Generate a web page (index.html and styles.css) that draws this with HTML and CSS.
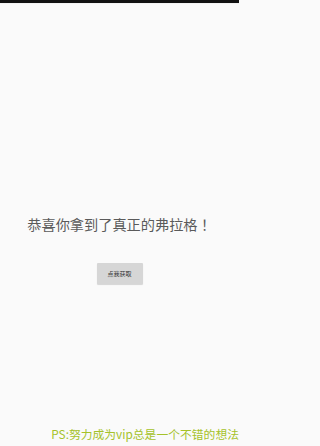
FILE: index.html
```html
<!DOCTYPE html>
<html>
<head>
<meta charset="utf-8">
<link rel="stylesheet" href="styles.css">
</head>
<body>
<div class="page">
  <div class="statusbar"></div>
  <main class="screen">
    <div class="center">
      <h1 class="title">恭喜你拿到了真正的弗拉格！</h1>
      <button class="btn">点我获取</button>
    </div>
    <p class="hint">PS:努力成为vip总是一个不错的想法</p>
  </main>
</div>
</body>
</html>
```
FILE: styles.css
```css
html, body {
  margin: 0;
  padding: 0;
  background: #fafafa;
  font-family: "Noto Sans CJK TC", "Noto Sans", sans-serif;
}
.page {
  width: 239px;
  height: 446px;
  overflow: hidden;
}
.statusbar {
  height: 3px;
  background: #111;
}
.screen {
  height: 443px;
  display: flex;
  flex-direction: column;
  border-top: 1px solid #f2f2f2;
  box-sizing: border-box;
}
.center {
  flex: 1;
  display: flex;
  flex-direction: column;
  align-items: center;
  padding-top: 210px;
}
.title {
  margin: 0;
  font-size: 14.2px;
  font-weight: normal;
  color: #5a5a5a;
  line-height: 20px;
  white-space: nowrap;
}
.btn {
  margin-top: 29px;
  width: 46px;
  height: 21px;
  padding: 0;
  border: none;
  border-radius: 1px;
  background: #d6d6d6;
  font-family: inherit;
  font-size: 6px;
  color: #333;
  box-shadow: 0 1px 1px rgba(0,0,0,0.15);
}
.hint {
  margin: 0 0 5px;
  text-align: right;
  font-size: 11.8px;
  line-height: 14px;
  color: #a5c22a;
  white-space: nowrap;
}
```
